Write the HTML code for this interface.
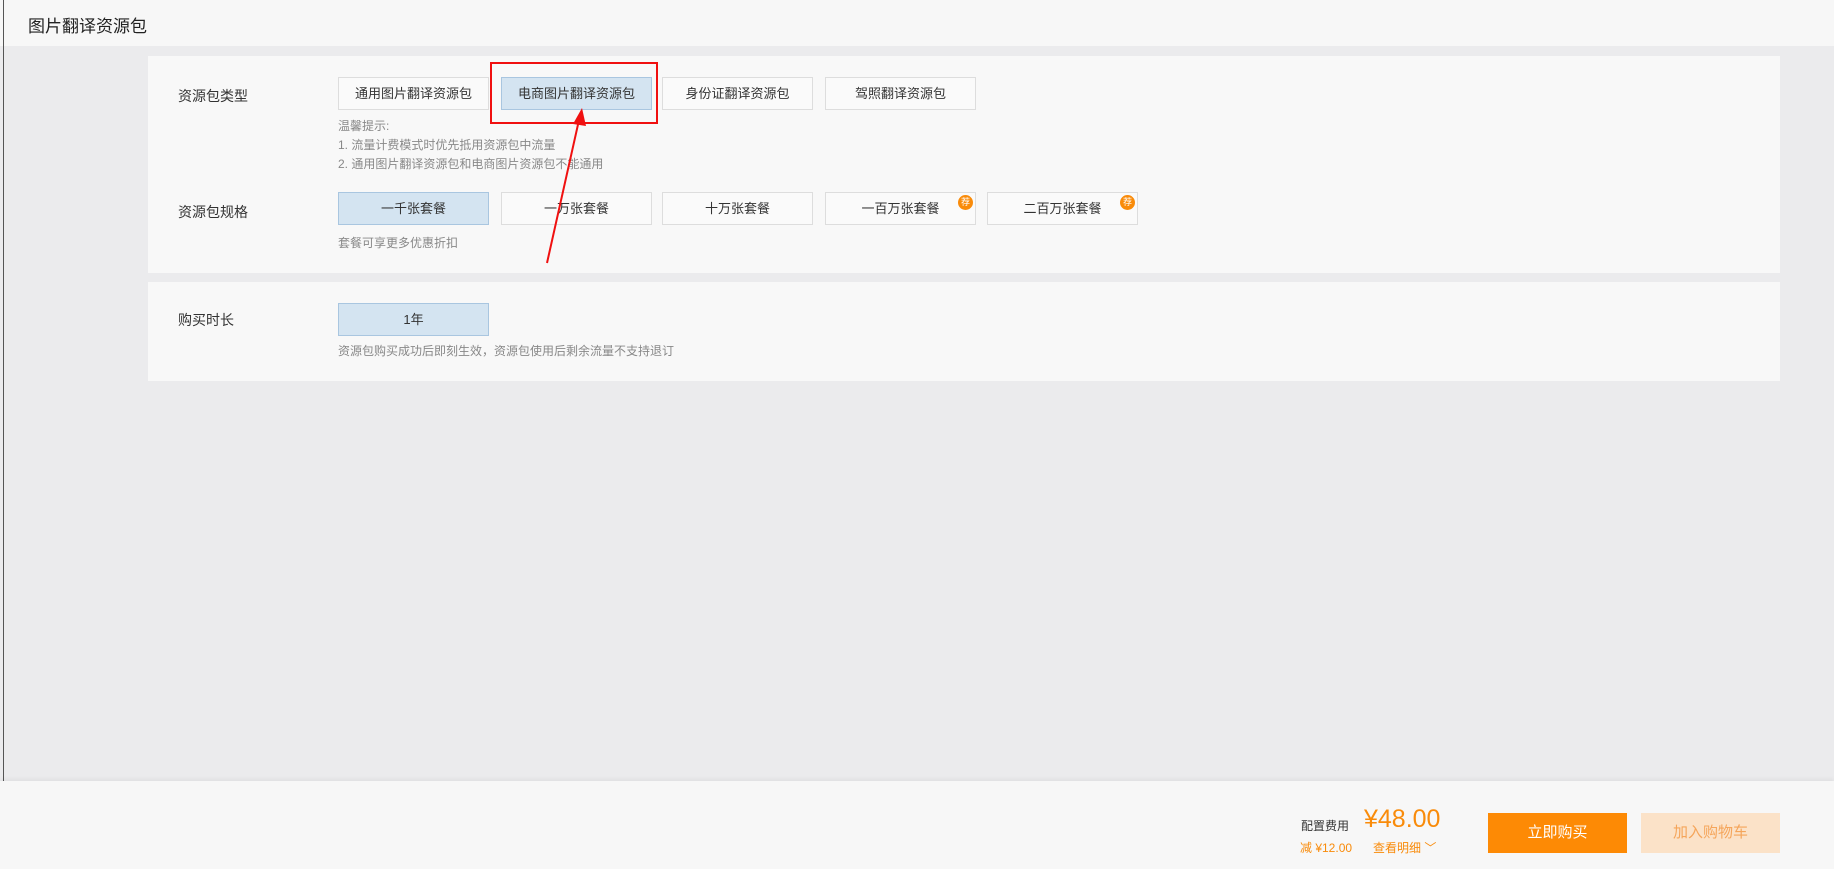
<!DOCTYPE html>
<html><head><meta charset="utf-8"><style>
*{margin:0;padding:0;box-sizing:border-box}
body{width:1834px;height:869px;overflow:hidden;background:#ebebed;font-family:"Liberation Sans","Noto Sans CJK SC",sans-serif;position:relative;color:#333}
.abs{position:absolute}
.hdr{left:0;top:0;width:1834px;height:46px;background:#f7f7f7}
.hdr span{position:absolute;left:28px;top:12px;font-size:17px;color:#222}
.lb{left:3px;top:0;width:1px;height:869px;background:#555}
.panel{background:#f8f8f8;left:148px;width:1632px}
.lab{font-size:14px;color:#333;left:178px}
.btn{position:absolute;width:151px;height:33px;border:1px solid #ddd;background:#fafafa;font-size:13px;line-height:31px;text-align:center;color:#333}
.sel{background:#d4e4f1;border-color:#a9c6e0}
.hint{font-size:12px;color:#888;left:338px;line-height:19px}
.badge{position:absolute;right:2px;top:2px;width:15px;height:15px;border-radius:50%;background:#f98b0a;color:#fff;font-size:9px;line-height:15px;text-align:center}
.foot{left:0;top:781px;width:1834px;height:88px;background:#f7f7f7;box-shadow:0 -2px 4px rgba(0,0,0,.05)}
</style></head><body>
<div class="abs hdr"><span>图片翻译资源包</span></div>
<div class="abs lb"></div>
<div class="abs panel" style="top:56px;height:217px"></div>
<div class="abs panel" style="top:282px;height:99px"></div>
<div class="abs lab" style="top:86px">资源包类型</div>
<div class="btn" style="left:338px;top:77px">通用图片翻译资源包</div>
<div class="btn sel" style="left:501px;top:77px">电商图片翻译资源包</div>
<div class="btn" style="left:662px;top:77px">身份证翻译资源包</div>
<div class="btn" style="left:825px;top:77px">驾照翻译资源包</div>
<div class="abs" style="left:490px;top:62px;width:168px;height:62px;border:2px solid #f01010"></div>
<div class="abs hint" style="top:117px">温馨提示:<br>1. 流量计费模式时优先抵用资源包中流量<br>2. 通用图片翻译资源包和电商图片资源包不能通用</div>
<div class="abs lab" style="top:202px">资源包规格</div>
<div class="btn sel" style="left:338px;top:192px">一千张套餐</div>
<div class="btn" style="left:501px;top:192px">一万张套餐</div>
<div class="btn" style="left:662px;top:192px">十万张套餐</div>
<div class="btn" style="left:825px;top:192px">一百万张套餐<span class="badge">荐</span></div>
<div class="btn" style="left:987px;top:192px">二百万张套餐<span class="badge">荐</span></div>
<div class="abs hint" style="top:234px">套餐可享更多优惠折扣</div>
<div class="abs lab" style="top:310px">购买时长</div>
<div class="btn sel" style="left:338px;top:303px">1年</div>
<div class="abs hint" style="top:342px">资源包购买成功后即刻生效，资源包使用后剩余流量不支持退订</div>
<svg class="abs" style="left:0;top:0" width="1834" height="869"><line x1="547" y1="263" x2="579" y2="120" stroke="#f01010" stroke-width="2"/><polygon points="582,108 573,124 586,126" fill="#f01010"/></svg>
<div class="abs foot"></div>
<div class="abs" style="left:1301px;top:817px;font-size:12px;color:#333">配置费用</div>
<div class="abs" style="left:1364px;top:805px;font-size:25px;color:#f98b0a">¥48.00</div>
<div class="abs" style="left:1300px;top:839px;font-size:12px;color:#f98b0a">减 ¥12.00</div>
<div class="abs" style="left:1373px;top:839px;font-size:12px;color:#f98b0a">查看明细 ﹀</div>
<div class="abs" style="left:1488px;top:813px;width:139px;height:40px;background:#fd8a05;color:#fff;font-size:15px;line-height:40px;text-align:center">立即购买</div>
<div class="abs" style="left:1641px;top:813px;width:139px;height:40px;background:#fbe2c8;color:#f5a55a;font-size:15px;line-height:40px;text-align:center">加入购物车</div>
</body></html>
